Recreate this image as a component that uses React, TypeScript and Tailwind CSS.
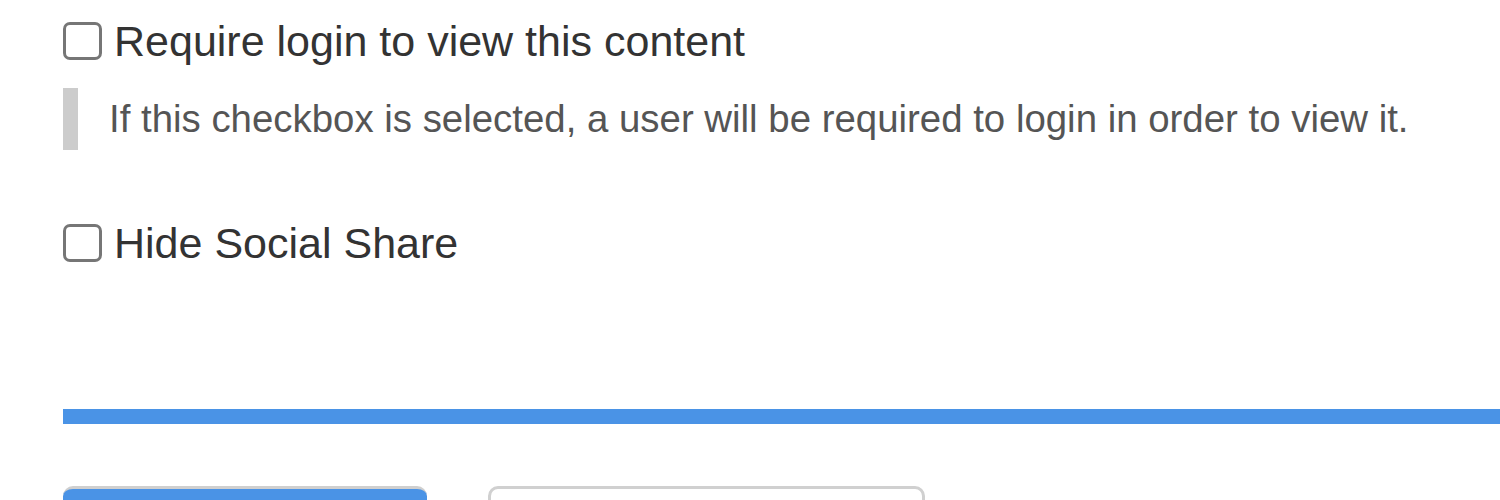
export default function App() {
  return (
    <div
      className="min-h-screen overflow-hidden bg-white pl-[63px]"
      style={{ fontFamily: '"Liberation Sans", Arial, Helvetica, sans-serif' }}
    >
      {/* Require login */}
      <label className="flex items-center gap-[12px] pt-[18px] text-[43px] leading-[46px] text-[#333]">
        <span className="block h-[38px] w-[39px] shrink-0 rounded-[7px] border-[3px] border-[#767676] bg-white" />
        <span>Require login to view this content</span>
      </label>

      <div className="mt-[24px] flex h-[62px] items-center border-l-[15px] border-[#cccccc] pl-[31px] text-[38.4px] text-[#555]">
        If this checkbox is selected, a user will be required to login in order to view it.
      </div>

      {/* Hide social share */}
      <label className="mt-[70px] flex items-center gap-[12px] text-[43px] leading-[46px] text-[#333]">
        <span className="block h-[38px] w-[39px] shrink-0 rounded-[7px] border-[3px] border-[#767676] bg-white" />
        <span>Hide Social Share</span>
      </label>

      <div className="mt-[143px] h-[15px] bg-[#4a93e6]" />

      <div className="mt-[62px] flex gap-[61px]">
        <button className="h-[70px] w-[364px] rounded-[10px] border-t-[3px] border-[#cfcfcf] bg-[#4a93e6]" />
        <button className="h-[70px] w-[437px] rounded-[10px] border-[3px] border-[#d0d0d0] bg-white" />
      </div>
    </div>
  );
}
